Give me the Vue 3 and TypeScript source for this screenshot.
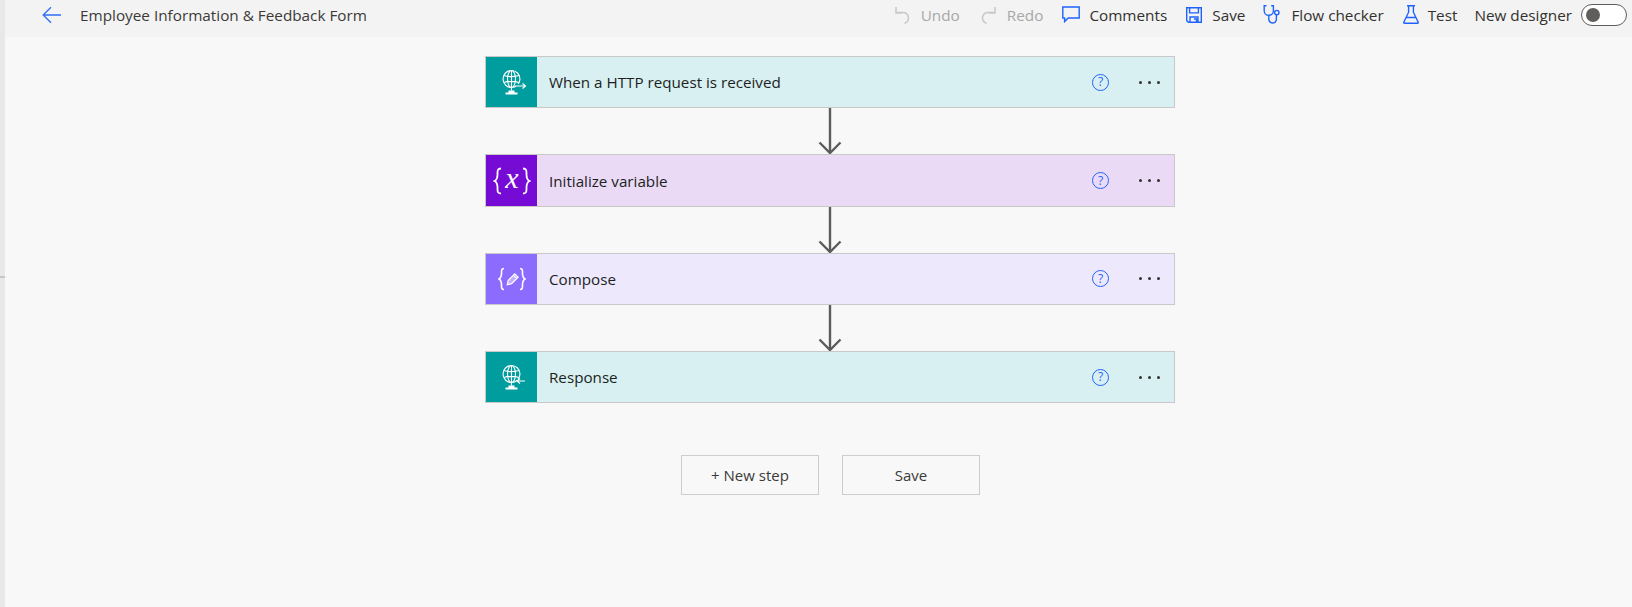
<template>
  <div class="page">
    <div class="rail"><span class="rail-mark"></span></div>
    <div class="main">
      <header class="toolbar">
        <button class="back" aria-label="Back">
          <svg width="20" height="18" viewBox="0 0 20 18" fill="none" stroke="#2f6ff5" stroke-width="1.3">
            <path d="M19 9H1.2M9 1.2 1.2 9 9 16.8" />
          </svg>
        </button>
        <span class="flow-name">Employee Information &amp; Feedback Form</span>
        <nav class="actions">
          <span class="action disabled undo">
            <svg width="15" height="18" viewBox="0 0 15 18" fill="none" stroke="#c8c8c8" stroke-width="1.5">
              <path d="M1 1v6h6M1 6.5h7a5.5 5.5 0 0 1 3.6 9.6L9.5 17.5" />
            </svg>
            Undo
          </span>
          <span class="action disabled redo">
            <svg width="15" height="18" viewBox="0 0 15 18" fill="none" stroke="#c8c8c8" stroke-width="1.5">
              <path d="M14 1v6H8M14 6.5H7a5.5 5.5 0 0 0-3.6 9.6l2.1 1.4" />
            </svg>
            Redo
          </span>
          <span class="action comments">
            <svg width="18" height="17" viewBox="0 0 18 17" fill="none" stroke="#1f63ff" stroke-width="1.4">
              <path d="M.8 1h16.4v11H6.2l-3.6 3.6V12H.8z" />
            </svg>
            Comments
          </span>
          <span class="action save">
            <svg width="16" height="16" viewBox="0 0 16 16" fill="none" stroke="#1f63ff" stroke-width="1.4">
              <path d="M.7.7h14.6v14.6H2.4L.7 13.6zM3.6.9v5h8.8v-5M4 15v-5h8v5M8 12h2.5v3" />
            </svg>
            Save
          </span>
          <span class="action checker">
            <svg width="19" height="19" viewBox="0 0 19 19" fill="none" stroke="#1f63ff" stroke-width="1.4">
              <path d="M3.5.7H1.2v5a4.6 4.6 0 0 0 9.2 0v-5H8.2M5.8 10.4v3.8a3.8 3.8 0 0 0 7.6 0V10" />
              <circle cx="13.8" cy="7.6" r="2.2" />
            </svg>
            Flow checker
          </span>
          <span class="action test">
            <svg width="16" height="19" viewBox="0 0 16 19" fill="none" stroke="#1f63ff" stroke-width="1.4">
              <path d="M4 .8h8M5.6.8v6.4L.8 17.2c-.3.6 0 1.1.7 1.1h13c.7 0 1-.5.7-1.1l-4.8-10V.8M3.4 12.5h9.2" />
            </svg>
            Test
          </span>
          <span class="action designer">New designer</span>
          <span class="toggle"><span class="knob"></span></span>
        </nav>
      </header>

      <section class="canvas">
        <template v-for="(step, i) in steps" :key="step.title">
          <div v-if="i > 0" class="connector">
            <svg width="26" height="46" viewBox="0 0 26 46" fill="none" stroke="#5c5c5c" stroke-width="2.4">
              <path d="M13 0v45" />
              <path d="M2.5 34.5 13 45l10.5-10.5" />
            </svg>
          </div>
          <article class="card" :class="step.kind">
            <div class="card-icon">
              <svg v-if="step.kind === 'request' || step.kind === 'response'" width="34" height="34" viewBox="0 0 34 34" fill="none" stroke="#fff" stroke-width="1.1">
                <circle cx="16.5" cy="14" r="8.5" />
                <ellipse cx="16.5" cy="14" rx="4" ry="8.5" />
                <path d="M9 10.5c4 1.5 11 1.5 15 0M9 17.5c4-1.5 11-1.5 15 0M16.5 5.5v20" />
                <path d="M13.5 26.5h6M10.5 28.5h12" stroke-width="2" />
                <template v-if="step.kind === 'request'">
                  <path d="M21 21h9" stroke="#009d9f" stroke-width="4" />
                  <path d="M21 21h9.5M27.5 18.5l3 2.5-3 2.5" />
                </template>
                <template v-else>
                  <path d="M22 21h8" stroke="#009d9f" stroke-width="4" />
                  <path d="M22 21h8M25 18.5l-3 2.5 3 2.5" />
                </template>
              </svg>
              <svg v-else-if="step.kind === 'variable'" width="38" height="40" viewBox="0 -4 38 40" fill="none" stroke="#fff" stroke-width="1.8">
                <path d="M8 3.5c-3.5 0-3.5 2-3.5 4.5s.5 6.5-3 8c3.5 1.5 3 5.500 3 8s0 4.500 3.500 4.500" />
                <path d="M30 3.5c3.5 0 3.5 2 3.5 4.5s-.5 6.5 3 8c-3.5 1.5-3 5.500-3 8s0 4.500-3.500 4.500" />
                <text x="19" y="22.5" text-anchor="middle" class="var-x">x</text>
              </svg>
              <svg v-else width="28" height="24" viewBox="0 0 28 24" fill="none" stroke="#fff" stroke-width="1.6">
                <path d="M6 1.5c-2.5 0-2.5 1.5-2.5 4s.3 5-2.5 6.5c2.8 1.5 2.5 4 2.5 6.500s0 4 2.500 4" />
                <path d="M22 1.5c2.5 0 2.5 1.5 2.5 4s-.3 5 2.5 6.5c-2.8 1.5-2.5 4-2.5 6.500s0 4-2.500 4" />
                <path d="M9.3 17.7l1-4.3 6.5-6.5 3.3 3.3-6.5 6.500zM15.5 8.3l3.3 3.3" fill="#fff" fill-opacity=".45" stroke-width="1.2" />
              </svg>
            </div>
            <span class="card-title">{{ step.title }}</span>
            <span class="help">?</span>
            <span class="more"><i></i><i></i><i></i></span>
          </article>
        </template>

        <div class="footer-buttons">
          <button class="outline">+ New step</button>
          <button class="outline">Save</button>
        </div>
      </section>
    </div>
  </div>
</template>

<script setup lang="ts">
interface Step {
  title: string
  kind: 'request' | 'variable' | 'compose' | 'response'
}

const steps: Step[] = [
  { title: 'When a HTTP request is received', kind: 'request' },
  { title: 'Initialize variable', kind: 'variable' },
  { title: 'Compose', kind: 'compose' },
  { title: 'Response', kind: 'response' }
]
</script>

<style>
html, body { margin: 0; background: #f8f8f8; overflow: hidden; }
</style>

<style scoped>
.page { display: flex; width: 1632px; height: 607px; font-family: "Open Sans", "Noto Sans", sans-serif; font-size: 15px; color: #323130; }
.rail { position: relative; width: 5px; background: #e8e8e8; flex: none; }
.rail-mark { position: absolute; left: 0; top: 276px; width: 5px; height: 2px; background: #c6c6c6; }
.main { flex: 1; min-width: 0; display: flex; flex-direction: column; }

.toolbar { display: flex; align-items: center; height: 37px; background: #f3f3f3; padding: 0 5px 7px 37px; box-sizing: border-box; flex: none; }
.back { display: flex; padding: 0; border: 0; background: none; margin-right: 18px; }
.flow-name { font-size: 15.3px; color: #3b3a39; }
.actions { display: flex; align-items: center; margin-left: auto; padding-bottom: 1px; }
.action { display: flex; align-items: center; white-space: nowrap; font-size: 15.3px; color: #323130; }
.action svg { flex: none; }
.disabled { color: #a8a8a8; }
.undo { gap: 11px; margin-right: 21px; }
.redo { gap: 11px; margin-right: 19px; }
.comments { gap: 9px; margin-right: 19px; }
.save { gap: 10px; margin-right: 18px; }
.checker { gap: 9px; margin-right: 19px; }
.test { gap: 9px; margin-right: 17px; }
.designer { margin-right: 9px; }
.toggle { display: flex; align-items: center; width: 46px; height: 22px; box-sizing: border-box; border: 1px solid #605e5c; border-radius: 11px; background: #fff; padding-left: 4px; }
.knob { width: 14px; height: 14px; border-radius: 50%; background: #605e5c; }

.canvas { flex: 1; display: flex; flex-direction: column; align-items: flex-start; padding: 19px 0 0 480px; background: #f8f8f8; }
.card { display: flex; align-items: center; width: 690px; height: 52.4px; box-sizing: border-box; border: 1px solid #c8c8c8; }
.card-icon { display: flex; align-items: center; justify-content: center; width: 51px; align-self: stretch; flex: none; }
.card-title { flex: 1; margin-left: 12px; font-size: 15.2px; color: #201f1e; }
.request, .response { background: #d8f0f1; }
.request .card-icon, .response .card-icon { background: #009d9f; }
.variable { background: #ebdaf6; }
.variable .card-icon { background: #770bd6; }
.compose { background: #eee8fd; }
.compose .card-icon { background: #8c6cff; }
.var-x { font-family: "Liberation Serif", serif; font-style: italic; font-size: 30px; fill: #fff; stroke: none; }
.help { display: flex; align-items: center; justify-content: center; width: 15px; height: 15px; border: 1px solid #1f63ff; border-radius: 50%; color: #1f63ff; font-size: 12px; line-height: 1; margin-right: 30px; }
.more { display: flex; gap: 6px; margin-right: 14px; }
.more i { width: 3px; height: 3px; border-radius: 50%; background: #323130; }
.connector { display: flex; width: 690px; height: 45.93px; justify-content: center; }
.connector svg { display: block; }

.footer-buttons { display: flex; gap: 23px; margin: 51.6px 0 0 196px; }
.outline { width: 138px; height: 40px; border: 1px solid #cdcdcd; background: #f8f8f8; color: #3b3a39; font: inherit; font-size: 15px; padding: 0; }
</style>
